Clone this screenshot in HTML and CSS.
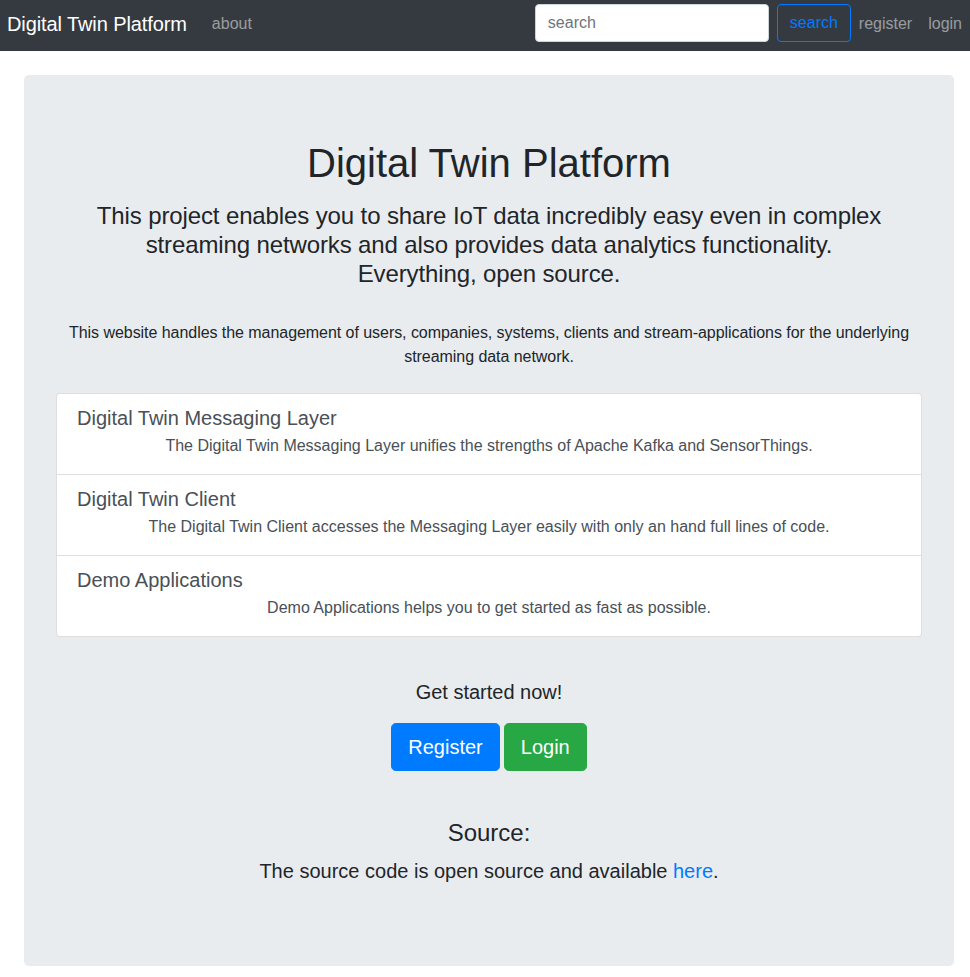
FILE: index.html
```html
<!DOCTYPE html>
<html lang="en">
<head>
<meta charset="utf-8">
<title>Digital Twin Platform</title>
<link rel="stylesheet" href="styles.css">
</head>
<body>
<nav class="navbar">
  <a class="brand" href="#">Digital Twin Platform</a>
  <a class="nav-link about" href="#">about</a>
  <div class="spacer"></div>
  <form class="search-form">
    <input class="search-input" type="search" placeholder="search">
    <button class="btn-outline" type="button">search</button>
  </form>
  <a class="nav-link" href="#">register</a>
  <a class="nav-link" href="#">login</a>
</nav>
<main class="jumbotron">
  <h1 class="title">Digital Twin Platform</h1>
  <h4 class="subtitle">This project enables you to share IoT data incredibly easy even in complex streaming networks and also provides data analytics functionality.<br>Everything, open source.</h4>
  <p class="intro">This website handles the management of users, companies, systems, clients and stream-applications for the underlying streaming data network.</p>
  <div class="list-group">
    <div class="list-item">
      <h5 class="item-title">Digital Twin Messaging Layer</h5>
      <p class="item-text">The Digital Twin Messaging Layer unifies the strengths of Apache Kafka and SensorThings.</p>
    </div>
    <div class="list-item">
      <h5 class="item-title">Digital Twin Client</h5>
      <p class="item-text">The Digital Twin Client accesses the Messaging Layer easily with only an hand full lines of code.</p>
    </div>
    <div class="list-item">
      <h5 class="item-title">Demo Applications</h5>
      <p class="item-text">Demo Applications helps you to get started as fast as possible.</p>
    </div>
  </div>
  <h5 class="started">Get started now!</h5>
  <div class="actions">
    <a class="btn-lg btn-primary" href="#">Register</a>
    <a class="btn-lg btn-success" href="#">Login</a>
  </div>
  <h4 class="source-title">Source:</h4>
  <p class="source-text">The source code is open source and available <a class="link" href="#">here</a>.</p>
</main>
</body>
</html>
```

FILE: styles.css
```css
* { box-sizing: border-box; }
html, body { margin: 0; padding: 0; }
body {
  font-family: "Liberation Sans", Arial, sans-serif;
  font-size: 16px;
  line-height: 1.5;
  color: #212529;
  background: #fff;
}
a { text-decoration: none; }

.navbar {
  display: flex;
  align-items: center;
  height: 51px;
  padding: 5px 0 8px 7px;
  background: #343a40;
}
.brand {
  color: #fff;
  font-size: 20px;
  line-height: 30px;
  letter-spacing: -0.1px;
  margin-right: 17px;
}
.nav-link {
  color: rgba(255,255,255,.5);
  font-size: 16px;
  line-height: 24px;
  padding: 8px;
}
.spacer { flex: 1; }
.search-form {
  display: flex;
  align-items: center;
}
.search-input {
  width: 234px;
  height: 38px;
  margin-top: -2px;
  padding: 6px 12px;
  font-family: inherit;
  font-size: 16px;
  color: #495057;
  background: #fff;
  border: 1px solid #ced4da;
  border-radius: 4px;
  margin-right: 8px;
  outline: none;
}
.search-input::placeholder { color: #6c757d; }
.btn-outline {
  height: 38px;
  width: 74px;
  margin-top: -2px;
  padding: 6px 12px;
  font-family: inherit;
  font-size: 16px;
  line-height: 24px;
  color: #007bff;
  background: transparent;
  border: 1px solid #007bff;
  border-radius: 4px;
}

.jumbotron {
  margin: 24px 16px 0 24px;
  padding: 64px 32px;
  background: #e9ecef;
  border-radius: 4.8px;
  text-align: center;
}
.title {
  margin: 0 0 15px;
  font-size: 40px;
  font-weight: 400;
  line-height: 48px;
}
.subtitle {
  margin: 0 0 33px;
  font-size: 24px;
  font-weight: 400;
  line-height: 28.8px;
  letter-spacing: -0.12px;
}
.intro {
  margin: 0 0 24px;
  font-size: 16px;
  line-height: 24px;
  letter-spacing: -0.05px;
}
.list-group {
  background: #fff;
  border: 1px solid rgba(0,0,0,.125);
  border-radius: 4px;
  text-align: left;
}
.list-item {
  padding: 12px 20px;
  color: #495057;
}
.list-item + .list-item { border-top: 1px solid rgba(0,0,0,.125); }
.item-title {
  margin: 0 0 4px;
  font-size: 20px;
  font-weight: 400;
  line-height: 24px;
}
.item-text {
  margin: 0 0 4px;
  text-align: center;
  line-height: 24px;
}
.started {
  margin: 43px 0 19px;
  font-size: 20px;
  font-weight: 400;
  line-height: 24px;
}
.actions {
  display: flex;
  justify-content: center;
  gap: 4px;
}
.btn-lg {
  display: inline-block;
  padding: 8px 16px;
  font-size: 20px;
  line-height: 30px;
  color: #fff;
  border: 1px solid transparent;
  border-radius: 4.8px;
}
.btn-primary { background: #007bff; border-color: #007bff; }
.btn-success { background: #28a745; border-color: #28a745; }
.source-title {
  margin: 47.6px 0 8.6px;
  font-size: 24px;
  font-weight: 400;
  line-height: 28.8px;
}
.source-text {
  margin: 0 0 16px;
  font-size: 20px;
  line-height: 30px;
}
.link { color: #007bff; }
```
